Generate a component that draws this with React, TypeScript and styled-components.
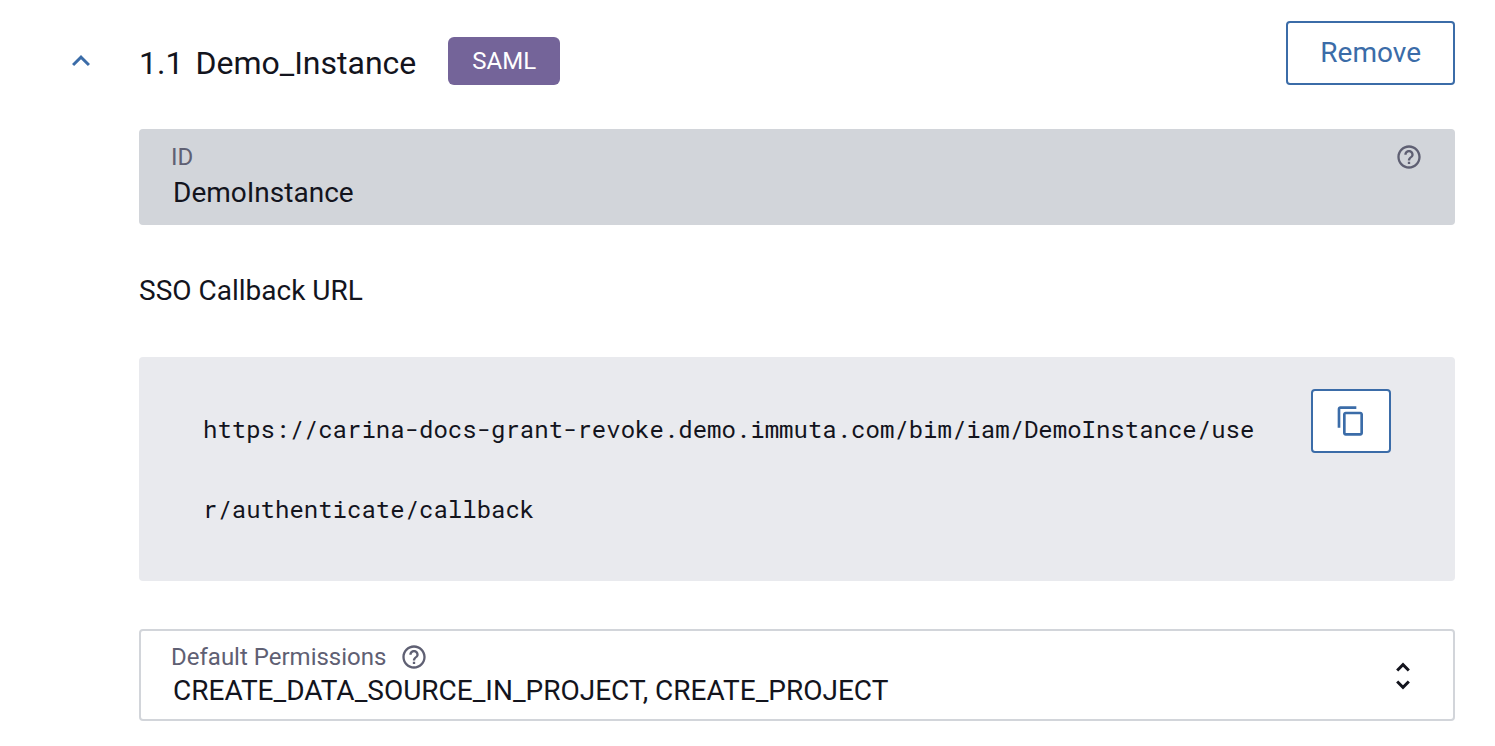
import React, { useState } from "react";
import styled, { createGlobalStyle } from "styled-components";

const blue = "#3b6ca8";
const ink = "#13141d";
const muted = "#5f6073";

const GlobalStyle = createGlobalStyle`
  *, *::before, *::after { box-sizing: border-box; }
  body {
    margin: 0;
    background: #fff;
    color: ${ink};
    font-family: Roboto, "Liberation Sans", sans-serif;
    font-size: 28px;
    line-height: 36px;
  }
`;

const Page = styled.main`
  display: grid;
  grid-template-columns: 36px minmax(0, 1fr);
  column-gap: 40px;
  padding: 21px 40px 24px 63px;
`;

const Toggle = styled.button`
  display: flex;
  align-items: center;
  align-self: start;
  height: 48px;
  margin: 16px 0 0;
  padding: 0;
  border: 0;
  background: none;
  color: ${blue};
  cursor: pointer;
`;

const Content = styled.section`
  display: flex;
  flex-direction: column;
`;

const Header = styled.header`
  display: flex;
  align-items: flex-end;
  margin-bottom: 44px;
`;

const Title = styled.h2`
  display: flex;
  gap: 12px;
  margin: 0 32px 0 0;
  font-size: 32px;
  font-weight: 400;
  line-height: 52px;
  height: 48px;
`;

const Badge = styled.span`
  height: 48px;
  padding: 0 24px;
  border-radius: 6px;
  background: #746499;
  color: #fff;
  font-size: 24px;
  line-height: 48px;
`;

const OutlineButton = styled.button<{ $square?: boolean }>`
  display: flex;
  align-items: center;
  justify-content: center;
  flex: none;
  height: 64px;
  min-width: 80px;
  padding: ${(p) => (p.$square ? "0" : "0 32px")};
  border: 2px solid ${blue};
  border-radius: 4px;
  background: #fff;
  color: ${blue};
  font: inherit;
  cursor: pointer;
`;

const RemoveButton = styled(OutlineButton)`
  margin-left: auto;
`;

const Field = styled.div<{ $filled?: boolean }>`
  display: flex;
  align-items: ${(p) => (p.$filled ? "flex-start" : "center")};
  padding: ${(p) => (p.$filled ? "14px 32px" : "12px 32px 10px 30px")};
  border: ${(p) => (p.$filled ? "0" : "2px solid #d2d5da")};
  border-radius: 4px;
  background: ${(p) => (p.$filled ? "#d2d5da" : "#fff")};
`;

const FieldBody = styled.div<{ $gap: number }>`
  display: flex;
  flex: 1;
  flex-direction: column;
  gap: ${(p) => p.$gap}px;
  min-width: 0;
`;

const LabelRow = styled.div`
  display: flex;
  align-items: center;
  gap: 14px;
  height: 28px;
`;

const Label = styled.label`
  color: ${muted};
  font-size: 24px;
  line-height: 28px;
`;

const HelpButton = styled.button`
  display: flex;
  padding: 0;
  border: 0;
  background: none;
  color: ${muted};
  cursor: pointer;
`;

const ValueInput = styled.input`
  width: 100%;
  height: 36px;
  padding: 0 2px;
  border: 0;
  background: none;
  color: ${ink};
  font: inherit;
`;

const ValueSelect = styled.select`
  width: 100%;
  height: 36px;
  padding: 0 2px;
  border: 0;
  appearance: none;
  background: none;
  color: ${ink};
  font: inherit;
`;

const SubHeading = styled.h3`
  margin: 48px 0;
  font-size: 28px;
  font-weight: 400;
  line-height: 36px;
`;

const CodePanel = styled.div`
  display: flex;
  align-items: flex-start;
  gap: 48px;
  margin-bottom: 48px;
  padding: 32px 64px;
  border-radius: 4px;
  background: #e9eaee;
`;

const Code = styled.code`
  flex: 1;
  min-width: 0;
  font-family: "Roboto Mono", "Liberation Mono", monospace;
  font-size: 24px;
  line-height: 80px;
  word-break: break-all;
`;

function Icon({ d, size }: { d: string; size: number }) {
  return (
    <svg width={size} height={size} viewBox="0 0 24 24" fill="currentColor" aria-hidden="true">
      <path d={d} />
    </svg>
  );
}

const paths = {
  less: "M12 8l-6 6 1.41 1.41L12 10.83l4.59 4.58L18 14z",
  help: "M11 18h2v-2h-2v2zm1-16C6.48 2 2 6.48 2 12s4.48 10 10 10 10-4.48 10-10S17.52 2 12 2zm0 18c-4.41 0-8-3.59-8-8s3.59-8 8-8 8 3.59 8 8-3.59 8-8 8zm0-14c-2.21 0-4 1.79-4 4h2c0-1.1.9-2 2-2s2 .9 2 2c0 2-3 1.75-3 5h2c0-2.25 3-2.5 3-5 0-2.21-1.79-4-4-4z",
  copy: "M16 1H4c-1.1 0-2 .9-2 2v14h2V3h12V1zm3 4H8c-1.1 0-2 .9-2 2v14c0 1.1.9 2 2 2h11c1.1 0 2-.9 2-2V7c0-1.1-.9-2-2-2zm0 16H8V7h11v14z",
  unfold: "M12 5.83L15.17 9l1.41-1.41L12 3 7.41 7.59 8.83 9 12 5.83zm0 12.34L8.83 15l-1.41 1.41L12 21l4.59-4.59L15.17 15 12 18.17z",
};

const callbackUrl =
  "https://carina-docs-grant-revoke.demo.immuta.com/bim/iam/DemoInstance/user/authenticate/callback";

export default function App() {
  const [open, setOpen] = useState(true);

  return (
    <>
      <GlobalStyle />
      <Page>
        <Toggle aria-label="Toggle section" aria-expanded={open} onClick={() => setOpen(!open)}>
          <Icon d={paths.less} size={36} />
        </Toggle>
        <Content>
          <Header>
            <Title>
              <span>1.1</span>
              <span>Demo_Instance</span>
            </Title>
            <Badge>SAML</Badge>
            <RemoveButton>Remove</RemoveButton>
          </Header>
          {open && (
            <>
              <Field $filled>
                <FieldBody $gap={4}>
                  <LabelRow>
                    <Label htmlFor="instance-id">ID</Label>
                  </LabelRow>
                  <ValueInput id="instance-id" defaultValue="DemoInstance" readOnly />
                </FieldBody>
                <HelpButton aria-label="About ID">
                  <Icon d={paths.help} size={28} />
                </HelpButton>
              </Field>
              <SubHeading>SSO Callback URL</SubHeading>
              <CodePanel>
                <Code>{callbackUrl}</Code>
                <OutlineButton
                  $square
                  aria-label="Copy URL"
                  onClick={() => navigator.clipboard?.writeText(callbackUrl)}
                >
                  <Icon d={paths.copy} size={32} />
                </OutlineButton>
              </CodePanel>
              <Field>
                <FieldBody $gap={2}>
                  <LabelRow>
                    <Label htmlFor="permissions">Default Permissions</Label>
                    <HelpButton aria-label="About default permissions">
                      <Icon d={paths.help} size={28} />
                    </HelpButton>
                  </LabelRow>
                  <ValueSelect id="permissions">
                    <option>CREATE_DATA_SOURCE_IN_PROJECT, CREATE_PROJECT</option>
                  </ValueSelect>
                </FieldBody>
                <Icon d={paths.unfold} size={36} />
              </Field>
            </>
          )}
        </Content>
      </Page>
    </>
  );
}
